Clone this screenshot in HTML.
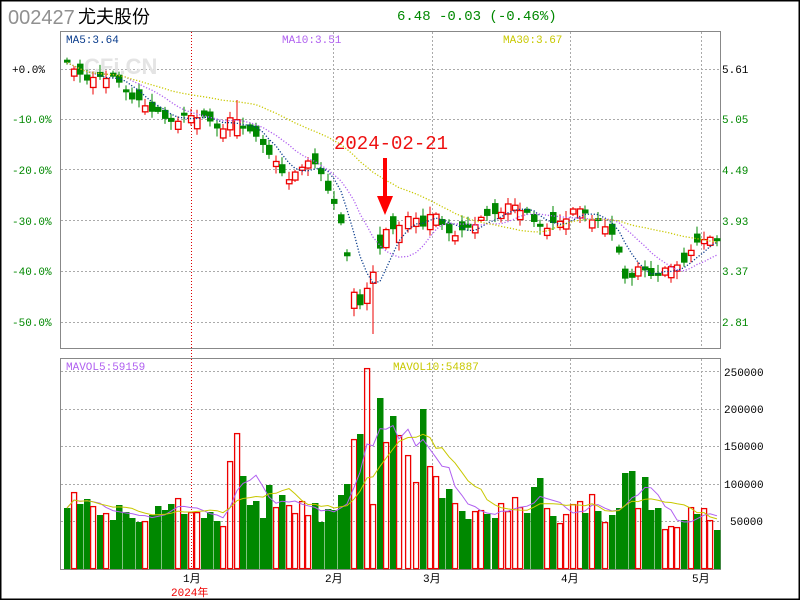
<!DOCTYPE html>
<html><head><meta charset="utf-8"><style>
body{margin:0;width:800px;height:600px;overflow:hidden;background:#fff;}
svg{display:block;font-family:"Liberation Mono","Noto Sans CJK SC",monospace;}
</style></head><body>
<svg id="s" width="800" height="600" xmlns="http://www.w3.org/2000/svg">
<rect x="0.5" y="0.5" width="799" height="599" fill="#fff" stroke="#000" stroke-width="2"/>
<text x="8" y="24" font-family="Liberation Sans,sans-serif" font-size="20" fill="#909090">002427</text>
<text x="78" y="23" font-family="Liberation Sans,'Noto Sans CJK SC',sans-serif" font-size="18" fill="#000">尤夫股份</text>
<text x="397" y="20" font-size="14" fill="#008800">6.48 -0.03 (-0.46%)</text>
<g id="grid" stroke="#aaa" stroke-dasharray="2 2" stroke-width="1"></g>
<text x="84" y="74" font-family="Liberation Sans,sans-serif" font-weight="bold" font-size="22" fill="#e4e4e4">CFi.CN</text>
<rect x="60.5" y="31.5" width="660" height="317" fill="none" stroke="#888"/>
<rect x="60.5" y="358.5" width="660" height="211" fill="none" stroke="#888"/>
<line x1="191.5" y1="32" x2="191.5" y2="569" stroke="#d00" stroke-dasharray="1 2"/>
<g id="c"></g>
<text x="66" y="43" font-size="11" fill="#0a3c8c">MA5:3.64</text>
<text x="282" y="43" font-size="11" fill="#b060f0">MA10:3.51</text>
<text x="503" y="43" font-size="11" fill="#c8c800">MA30:3.67</text>
<text x="66" y="370" font-size="11" fill="#b060f0">MAVOL5:59159</text>
<text x="393" y="370" font-size="11" fill="#c8c800">MAVOL10:54887</text>
<g font-size="11">
<text x="12" y="73" fill="#000">+0.0%</text>
<text x="12" y="123" fill="#080">-10.0%</text>
<text x="12" y="174" fill="#080">-20.0%</text>
<text x="12" y="225" fill="#080">-30.0%</text>
<text x="12" y="275" fill="#080">-40.0%</text>
<text x="12" y="326" fill="#080">-50.0%</text>
<text x="722" y="73" fill="#000">5.61</text>
<text x="722" y="123" fill="#080">5.05</text>
<text x="722" y="174" fill="#080">4.49</text>
<text x="722" y="225" fill="#080">3.93</text>
<text x="722" y="275" fill="#080">3.37</text>
<text x="722" y="326" fill="#080">2.81</text>
<text x="724" y="376" fill="#000">250000</text>
<text x="724" y="413" fill="#000">200000</text>
<text x="724" y="450" fill="#000">150000</text>
<text x="724" y="488" fill="#000">100000</text>
<text x="730" y="525" fill="#000">50000</text>
<text x="183" y="582" fill="#000">1月</text>
<text x="325" y="582" fill="#000">2月</text>
<text x="423" y="582" fill="#000">3月</text>
<text x="561" y="582" fill="#000">4月</text>
<text x="692" y="582" fill="#000">5月</text>
<text x="171" y="596" fill="#e00">2024年</text>
</g>
<text x="334" y="149" font-size="19" fill="#ee1111">2024-02-21</text>
<rect x="383" y="158" width="4" height="40" fill="#f00"/>
<polygon points="377,196 393,196 385,215" fill="#f00"/>
</svg>
<script>
var NS="http://www.w3.org/2000/svg",g=document.getElementById('c'),gr=document.getElementById('grid');
function el(t,a,p){var e=document.createElementNS(NS,t);for(var k in a)e.setAttribute(k,a[k]);(p||g).appendChild(e);return e;}
[69,119,169,220,271,322,371,409,446,484,521].forEach(function(y){el('line',{x1:61,x2:720,y1:y+.5,y2:y+.5},gr);});
[333,432,570,701].forEach(function(x){el('line',{x1:x+.5,x2:x+.5,y1:32,y2:348},gr);el('line',{x1:x+.5,x2:x+.5,y1:359,y2:569},gr);});
var V=[[64,508,0],[71,492,1],[77,504,0],[84,499,0],[90,506,1],[97,515,0],[103,513,1],[110,520,0],[116,505,0],[123,512,0],[129,518,0],[136,522,0],[142,521,1],[149,515,0],[155,506,0],[162,510,0],[168,504,0],[175,498,1],[181,514,0],[188,512,1],[194,512,1],[201,518,0],[207,512,0],[214,521,0],[220,526,1],[227,461,1],[234,433,1],[240,476,0],[247,505,0],[253,501,0],[260,518,0],[266,485,0],[273,507,1],[279,495,0],[286,505,1],[292,513,1],[299,501,1],[305,515,1],[312,503,0],[318,522,0],[325,509,0],[331,510,0],[338,495,0],[344,484,0],[351,439,1],[357,434,0],[364,368,1],[370,504,1],[377,398,0],[383,442,1],[390,416,0],[396,435,1],[405,455,1],[413,482,1],[420,409,0],[427,466,1],[433,476,1],[439,498,0],[446,489,0],[452,503,1],[459,511,0],[465,519,0],[472,511,1],[478,510,1],[484,514,0],[492,518,0],[498,503,1],[505,511,1],[512,497,1],[517,507,1],[524,513,0],[531,487,0],[537,478,0],[544,508,1],[550,516,0],[557,523,1],[563,514,1],[570,504,1],[577,501,1],[582,513,0],[589,494,1],[595,511,0],[602,522,1],[609,515,0],[616,508,0],[622,473,0],[629,471,0],[635,508,1],[642,477,0],[648,510,0],[655,508,0],[662,529,1],[668,526,1],[674,527,1],[681,520,0],[688,507,1],[694,514,0],[701,508,1],[707,520,1],[714,530,0]];
var K=[[64,63],[77,72],[90,80],[103,76],[116,80],[129,95],[142,104],[155,112],[168,122],[181,118],[194,115],[207,120],[220,130],[227,122],[234,116],[247,132],[260,140],[273,158],[286,180],[299,172],[312,155],[325,185],[338,210],[351,278],[357,305],[364,300],[370,280],[377,262],[383,232],[390,232],[396,228],[405,218],[413,208],[420,236],[427,214],[433,212],[446,232],[459,234],[472,225],[484,218],[498,212],[512,203],[524,212],[537,226],[550,226],[563,220],[577,208],[589,215],[602,226],[609,228],[616,240],[622,270],[629,292],[635,262],[642,268],[648,276],[655,276],[662,272],[674,266],[688,258],[694,246],[701,238],[707,238],[714,242]];
function interp(x){for(var i=0;i<K.length-1;i++){if(x<=K[i+1][0]){var t=(x-K[i][0])/(K[i+1][0]-K[i][0]);return K[i][1]+t*(K[i+1][1]-K[i][1]);}}return K[K.length-1][1];}
var C=[],vol=[];
V.forEach(function(v,i){
 var c=interp(v[0]+3)+((i*37)%7-3)*0.8;
 var red=v[2]==1,o;
 var bl=3+((i*13)%9)+(v[1]<470?8:0);
 if(red){o=c+bl;} else {o=c-bl;}
 C.push(c);
 var top=Math.min(o,c),bot=Math.max(o,c);
 var hi=top-2-((i*29)%7),lo=bot+2+((i*31)%7);
 if(v[0]==370)lo=334; if(v[0]==234)hi=100;
 var col=red?'#e00':'#080',cx=v[0]+3;
 el('line',{x1:cx,x2:cx,y1:hi,y2:lo,stroke:col});
 if(red)el('rect',{x:v[0]+.5,y:top,width:5.5,height:Math.max(bot-top,1),fill:'#fff',stroke:col,'stroke-width':1.3});
 else el('rect',{x:v[0],y:top,width:6.5,height:Math.max(bot-top,1.5),fill:col});
 if(red)el('rect',{x:v[0]+.6,y:v[1]+.6,width:5,height:569-v[1]-1,fill:'none',stroke:col,'stroke-width':1.3});
 else el('rect',{x:v[0],y:v[1],width:6.5,height:569-v[1],fill:col});
 vol.push(569-v[1]);
});
function ma(arr,n,off){var pts=[];for(var i=0;i<arr.length;i++){var s=0,k=0;for(var j=Math.max(0,i-n+1);j<=i;j++){s+=arr[j];k++;}pts.push((V[i][0]+3)+','+(off(s/k)).toFixed(1));}return pts.join(' ');}
var id=function(x){return x;};
el('polyline',{points:ma(C,5,id),fill:'none',stroke:'#0a3c8c','stroke-dasharray':'1.2 1.8','stroke-width':1.3});
el('polyline',{points:ma(C,10,id),fill:'none',stroke:'#b060f0','stroke-dasharray':'1.2 1.8','stroke-width':1.3});
el('polyline',{points:ma(C,30,id),fill:'none',stroke:'#c8c800','stroke-dasharray':'1.2 1.8','stroke-width':1.3});
var vy=function(h){return 569-h;};
el('polyline',{points:ma(vol,5,vy),fill:'none',stroke:'#b060f0','stroke-width':1});
el('polyline',{points:ma(vol,10,vy),fill:'none',stroke:'#c8c800','stroke-width':1});
</script>
</body></html>
